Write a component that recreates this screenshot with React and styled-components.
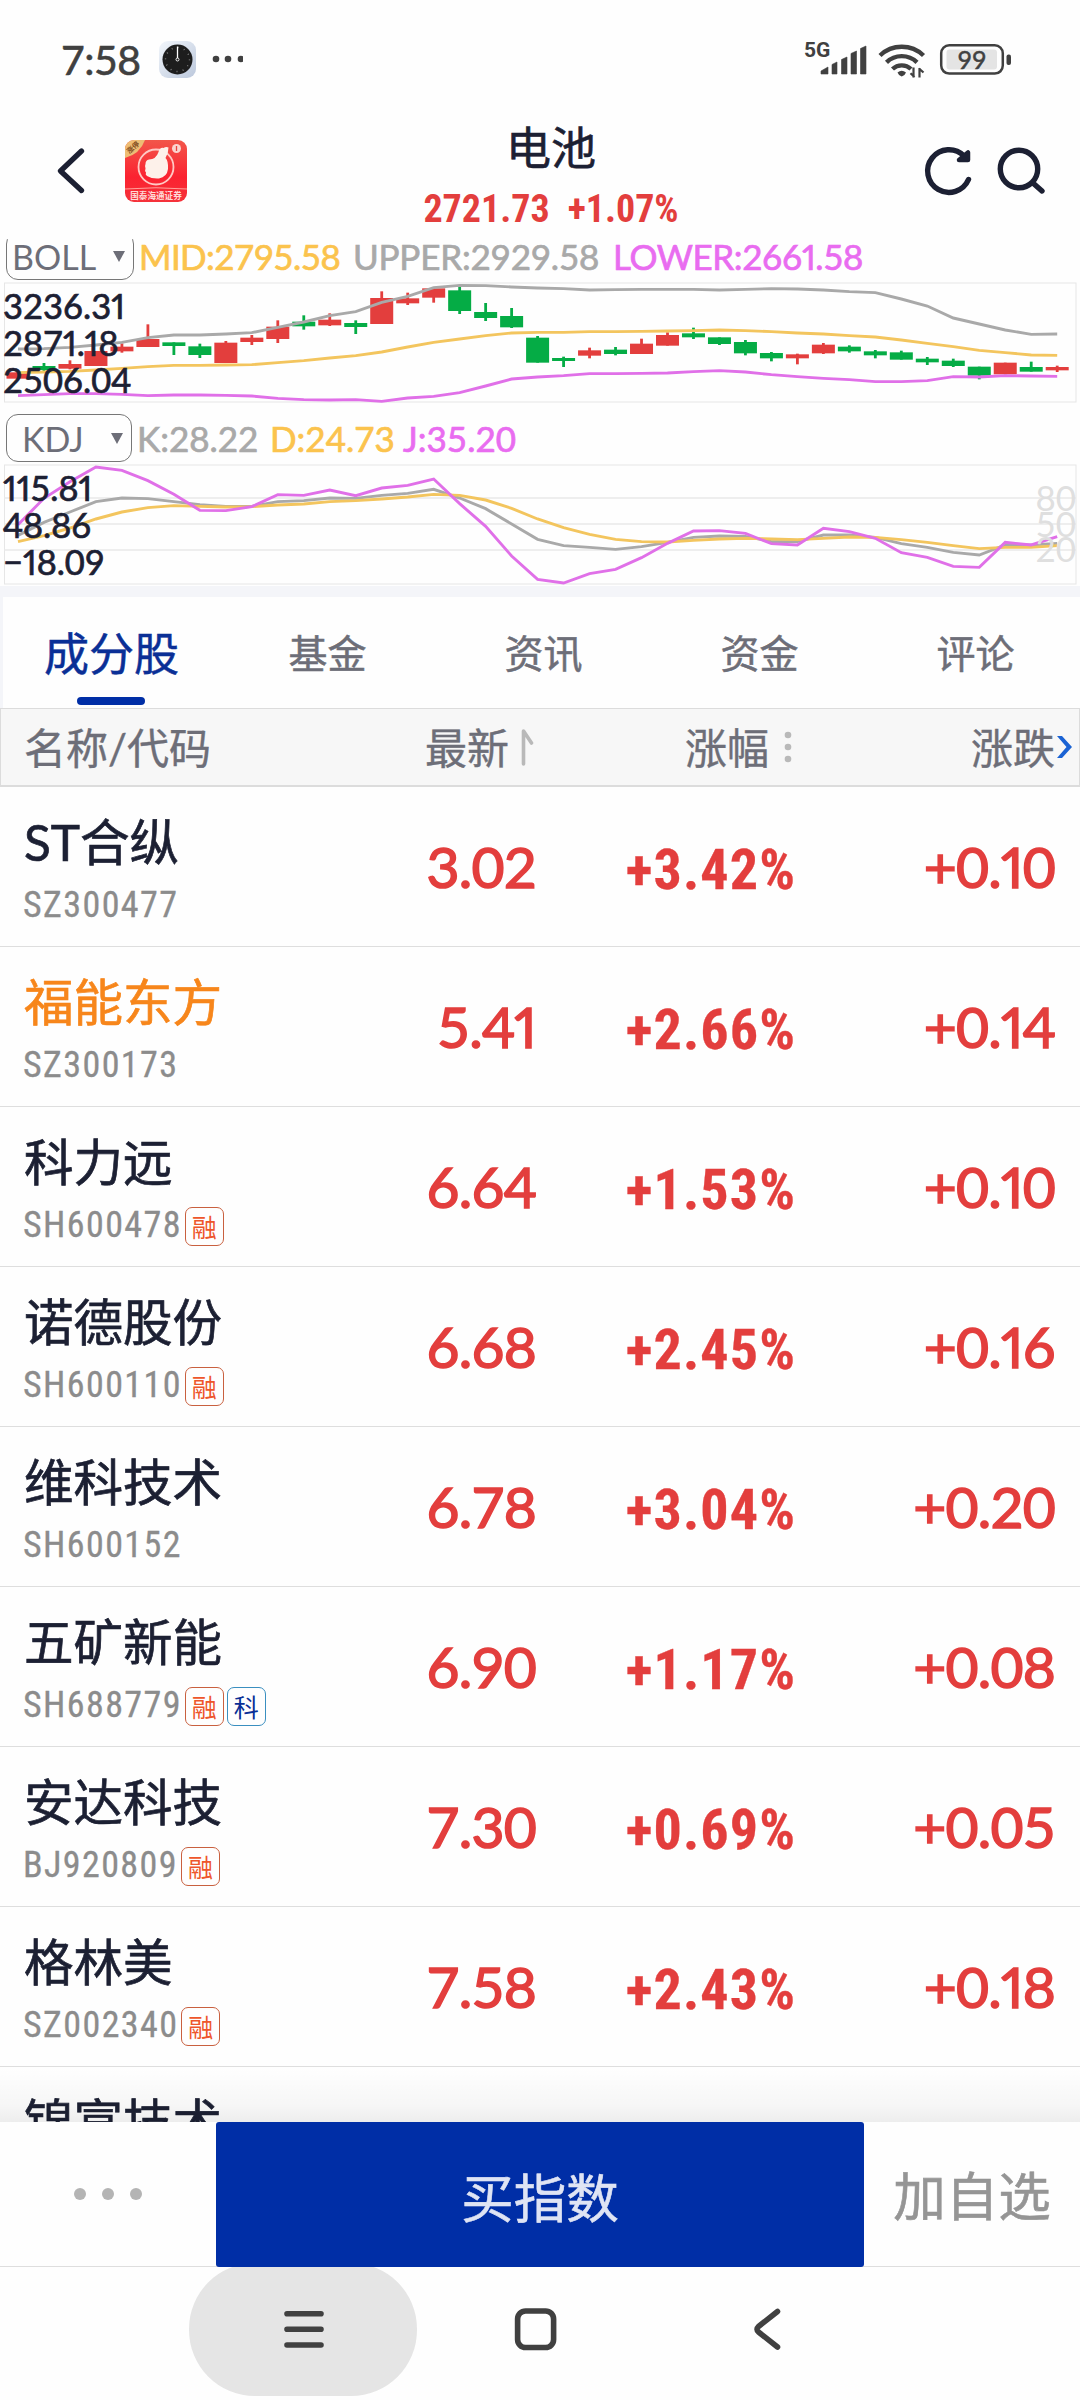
import React from 'react';
import styled, { createGlobalStyle } from 'styled-components';

const ink = '#1c2033';
const red = '#e33e3d';
const green = '#05ac45';
const blue = '#002ea6';
const muted = '#6d6e78';
const grey = '#a9a9a9';
const yellow = '#fbc34d';
const pink = '#e96cf0';

const GlobalStyle = createGlobalStyle`
  * {
    box-sizing: border-box;
  }

  body {
    margin: 0;
    background: #fefefe;
    font-family: Lato, 'Noto Sans CJK SC', sans-serif;
    color: ${ink};
  }
`;

const Screen = styled.div`
  width: 1080px;
  height: 2400px;
  display: flex;
  flex-direction: column;
  overflow: hidden;
  background: #fefefe;
`;

const StatusBar = styled.div`
  height: 100px;
  padding: 20px 66px 0 61px;
  display: flex;
  align-items: center;
  color: #404040;
`;

const Time = styled.span`
  width: 98px;
  font-size: 41px;
  line-height: 40px;
  letter-spacing: -0.5px;
  -webkit-text-stroke: 0.6px;
`;

const StatusIcons = styled.svg`
  margin-left: auto;
`;

const Header = styled.header`
  height: 139px;
  padding: 0 34px 0 56px;
  display: flex;
  align-items: flex-start;
`;

const HeaderLeft = styled.div`
  width: 300px;
  display: flex;
  gap: 39px;
  padding-top: 40px;
`;

const HeaderTitle = styled.div`
  width: 390px;
  text-align: center;
  padding-top: 19px;
`;

const Title = styled.h1`
  margin: 0;
  font-size: 45px;
  line-height: 58px;
  font-weight: 400;
  -webkit-text-stroke: 0.6px;
`;

const Quote = styled.div`
  font-family: Roboto, sans-serif;
  font-stretch: 87%;
  font-size: 38px;
  line-height: 44px;
  font-weight: 700;
  color: ${red};
  display: flex;
  justify-content: center;
  gap: 18px;
  margin-top: 10px;
`;

const HeaderRight = styled.div`
  margin-left: auto;
  padding-top: 40px;
`;

const Charts = styled.section`
  height: 347px;
  overflow: hidden;
  display: flex;
  flex-direction: column;
  flex-shrink: 0;
`;

const IndicatorRow = styled.div`
  height: 48px;
  margin-top: ${(p) => p.$top}px;
  padding-left: 6px;
  display: flex;
  align-items: center;
  flex-shrink: 0;
`;

const Select = styled.div`
  width: ${(p) => p.$width}px;
  height: 48px;
  border: 1.5px solid #777;
  border-radius: 12px;
  display: flex;
  align-items: center;
  justify-content: space-between;
  padding: 0 8px 0 ${(p) => p.$indent}px;
  font-size: 34px;
  color: ${muted};
`;

const Triangle = styled.i`
  border: 6px solid transparent;
  border-top: 11px solid ${muted};
  border-bottom: 0;
`;

const Value = styled.span`
  margin-left: ${(p) => p.$gap}px;
  width: ${(p) => p.$width}px;
  font-size: 35px;
  letter-spacing: ${(p) => p.$spacing || 0}px;
  -webkit-text-stroke: 0.7px;
  white-space: nowrap;
  color: ${(p) => p.$color};
`;

const ChartBox = styled.div`
  position: relative;
  height: 121px;
  margin-top: ${(p) => p.$top}px;
  flex-shrink: 0;

  svg {
    display: block;
  }
`;

const Axis = styled.div`
  position: absolute;
  left: 3px;
  top: ${(p) => p.$top}px;
  display: flex;
  flex-direction: column;
  font-size: 34.5px;
  line-height: 37px;
  -webkit-text-stroke: 0.7px;
`;

const Levels = styled.div`
  position: absolute;
  right: 4px;
  top: 21px;
  display: flex;
  flex-direction: column;
  font-size: 35px;
  line-height: 25.7px;
  color: #dfdfdf;
`;

const Tabs = styled.nav`
  height: 122px;
  border-top: 11px solid #f4f5f9;
  border-left: 3px solid #f4f5f9;
  display: flex;
  overflow: hidden;
  flex-shrink: 0;
`;

const Tab = styled.div`
  flex: 0 0 216px;
  display: flex;
  flex-direction: column;
  align-items: center;
  justify-content: space-between;
  padding-bottom: 3px;
  font-size: ${(p) => (p.$active ? 45 : 39)}px;
  line-height: ${(p) => (p.$active ? 114 : 113)}px;
  color: ${(p) => (p.$active ? '#0a2f96' : muted)};
  -webkit-text-stroke: 0.5px;
  height: 111px;

  span {
    height: 90px;
    padding-left: 1px;
  }

  &::after {
    content: '';
    width: 68px;
    height: 8px;
    border-radius: 4px;
    background: ${(p) => (p.$active ? blue : 'transparent')};
  }
`;

const columns = `
  display: grid;
  grid-template-columns: 384px 152px 260px 259px;
`;

const TableHead = styled.div`
  ${columns}
  height: 79px;
  flex-shrink: 0;
  align-items: center;
  background: #f7f7f7;
  border: 1px solid #dcdcdc;
  border-bottom-width: 2px;
  padding-top: 2px;
  font-size: 42px;
  line-height: 60px;
  color: ${muted};
  white-space: nowrap;
  -webkit-text-stroke: 0.4px;
`;

const HeadCell = styled.div`
  display: flex;
  align-items: center;
  justify-content: ${(p) => (p.$first ? 'flex-start' : 'flex-end')};
  padding-left: ${(p) => (p.$first ? 23 : 0)}px;
  margin-right: ${(p) => p.$shift || 0}px;

  svg {
    margin-left: ${(p) => p.$gap || 0}px;
    margin-top: -2px;
  }
`;

const List = styled.main`
  height: 1335px;
  overflow: hidden;
  flex-shrink: 0;
  position: relative;

  &::after {
    content: '';
    position: absolute;
    left: 0;
    right: 0;
    bottom: 0;
    height: 54px;
    background: linear-gradient(rgba(0, 0, 0, 0), rgba(0, 0, 0, 0.03) 70%, rgba(0, 0, 0, 0.065));
  }
`;

const Row = styled.div`
  ${columns}
  height: 160px;
  border-bottom: 1px solid #dedede;
`;

const Stock = styled.div`
  padding: 23px 0 0 24px;
  white-space: nowrap;
`;

const Name = styled.div`
  font-size: 49.5px;
  line-height: 64px;
  -webkit-text-stroke: 0.7px;
  color: ${(p) => (p.$hot ? '#f7861b' : ink)};
`;

const Code = styled.div`
  display: flex;
  align-items: center;
  gap: 3px;
  height: 39px;
  margin-top: 13px;
  margin-left: -1px;
  font-family: Roboto, sans-serif;
  font-stretch: 87%;
  font-size: 36px;
  color: #8c8c8c;

  > span:first-child {
    letter-spacing: 1.4px;
    margin-top: -3px;
    -webkit-text-stroke: 0.3px;
  }
`;

const Tag = styled.span`
  width: 39px;
  height: 39px;
  border: 1.5px solid ${(p) => (p.$blue ? '#3a8fc0' : '#c9603f')};
  border-radius: 7px;
  font-family: 'Noto Sans CJK SC', sans-serif;
  font-size: 25px;
  line-height: 37px;
  text-align: center;
  color: ${(p) => (p.$blue ? '#0a2f96' : '#ee562b')};
`;

const Num = styled.div`
  text-align: right;
  font-size: 57px;
  line-height: 70px;
  padding-top: 44px;
  letter-spacing: -0.8px;
  -webkit-text-stroke: 1.5px;
  color: ${red};
`;

const Percent = styled(Num)`
  font-family: Roboto, sans-serif;
  font-stretch: 87%;
  font-size: 56px;
  font-weight: 700;
  letter-spacing: 1.1px;
  -webkit-text-stroke: 0.3px;
  padding-top: 48px;
`;

const One = styled.span`
  font-variant-numeric: proportional-nums;
`;

const BottomBar = styled.div`
  height: 145px;
  flex-shrink: 0;
  display: flex;
  border-bottom: 1px solid #dedede;
`;

const More = styled.div`
  width: 216px;
  display: flex;
  align-items: center;
  justify-content: center;
  gap: 16px;

  i {
    width: 12px;
    height: 12px;
    border-radius: 50%;
    background: #b4b4b4;
  }
`;

const Buy = styled.button`
  width: 648px;
  height: 145px;
  border: 0;
  border-radius: 3px;
  background: ${blue};
  color: #dfe4f4;
  font: inherit;
  font-size: 52.5px;
  -webkit-text-stroke: 0.6px;
`;

const AddFavorite = styled.div`
  flex: 1;
  text-align: center;
  font-size: 52.5px;
  line-height: 148px;
  -webkit-text-stroke: 0.6px;
  color: #959595;
`;

const NavBar = styled.div`
  height: 133px;
  flex-shrink: 0;
`;

const x = (i) => 18 + i * 25.98;

// [high, low, body top, body bottom, rising]
const candles = [
  [427, 446, 427, 446, 1], [399, 428, 408, 420, 0], [391, 418, 402, 416, 1], [363, 408, 363, 408, 1],
  [340, 368, 350, 364, 1], [283, 351, 327, 351, 1], [337, 375, 337, 348, 0], [341, 384, 349, 375, 0],
  [333, 399, 338, 399, 1], [315, 345, 323, 336, 1], [271, 339, 290, 327, 1], [256, 299, 275, 289, 0],
  [250, 288, 269, 286, 1], [271, 312, 279, 291, 0], [184, 282, 204, 282, 1], [188, 225, 205, 220, 1],
  [175, 218, 175, 203, 1], [170, 252, 181, 243, 0], [219, 273, 246, 264, 0], [234, 294, 258, 292, 0],
  [318, 398, 323, 398, 0], [380, 411, 384, 393, 0], [353, 385, 361, 377, 1], [351, 376, 359, 372, 0],
  [326, 372, 341, 372, 1], [307, 347, 315, 347, 1], [293, 327, 310, 322, 0], [322, 345, 322, 342, 0],
  [330, 376, 336, 370, 0], [366, 394, 369, 385, 0], [371, 403, 373, 385, 1], [339, 372, 344, 370, 1],
  [346, 368, 350, 364, 0], [360, 385, 364, 376, 0], [362, 389, 367, 389, 0], [381, 405, 386, 397, 0],
  [386, 411, 392, 408, 0], [410, 448, 410, 437, 0], [398, 433, 398, 433, 1], [395, 425, 411, 425, 0],
  [407, 426, 411, 421, 1],
];

const boll = {
  upper: [357, 356, 352, 345, 337, 323, 315, 315, 312, 308, 292, 276, 257, 245, 217, 199, 173, 166, 167, 171, 174, 176, 180, 179, 178, 178, 178, 180, 178, 176, 177, 180, 185, 188, 207, 228, 264, 282, 300, 313, 312],
  mid: [428, 426, 424, 420, 415, 410, 406, 406, 405, 404, 398, 392, 384, 377, 366, 351, 337, 327, 317, 309, 307, 307, 305, 305, 304, 303, 302, 300, 302, 305, 309, 312, 317, 321, 330, 340, 350, 361, 368, 375, 376],
  lower: [497, 494, 491, 491, 493, 497, 495, 495, 496, 498, 505, 509, 510, 509, 514, 504, 499, 488, 468, 447, 441, 437, 431, 431, 430, 429, 425, 422, 426, 434, 440, 445, 449, 455, 455, 452, 440, 441, 437, 438, 439],
};

const kdj = {
  k: [916, 877, 846, 815, 804, 806, 815, 824, 829, 829, 815, 812, 804, 805, 796, 790, 778, 804, 836, 882, 928, 947, 952, 958, 950, 937, 922, 918, 919, 935, 935, 915, 915, 922, 941, 952, 967, 975, 945, 945, 940],
  d: [935, 917, 894, 867, 846, 833, 827, 829, 831, 830, 825, 822, 815, 812, 807, 801, 793, 796, 810, 835, 867, 893, 913, 928, 935, 936, 931, 927, 925, 927, 929, 925, 921, 922, 929, 937, 947, 956, 952, 952, 947],
  j: [884, 805, 755, 711, 721, 752, 793, 841, 842, 830, 794, 796, 780, 797, 774, 766, 747, 821, 889, 978, 1048, 1059, 1031, 1018, 983, 940, 903, 902, 910, 941, 945, 895, 905, 925, 968, 982, 1009, 1012, 937, 945, 920],
};

const Line = ({ data, base, color }) => (
  <polyline
    points={data.map((v, i) => `${x(i)},${(v - base) / 3}`).join(' ')}
    fill="none"
    stroke={color}
    strokeWidth="2.9"
  />
);

// tabular digits everywhere, except for a narrow 1
const Digits = ({ children }) =>
  children.split(/(1)/).filter(Boolean).map((part, i) => (part === '1' ? <One key={i}>1</One> : part));

const stocks = [
  { name: 'ST合纵', code: 'SZ300477', price: '3.02', pct: '+3.42%', diff: '+0.10' },
  { name: '福能东方', code: 'SZ300173', price: '5.41', pct: '+2.66%', diff: '+0.14', hot: true },
  { name: '科力远', code: 'SH600478', price: '6.64', pct: '+1.53%', diff: '+0.10', tags: ['融'] },
  { name: '诺德股份', code: 'SH600110', price: '6.68', pct: '+2.45%', diff: '+0.16', tags: ['融'] },
  { name: '维科技术', code: 'SH600152', price: '6.78', pct: '+3.04%', diff: '+0.20' },
  { name: '五矿新能', code: 'SH688779', price: '6.90', pct: '+1.17%', diff: '+0.08', tags: ['融', '科'] },
  { name: '安达科技', code: 'BJ920809', price: '7.30', pct: '+0.69%', diff: '+0.05', tags: ['融'] },
  { name: '格林美', code: 'SZ002340', price: '7.58', pct: '+2.43%', diff: '+0.18', tags: ['融'] },
  { name: '锦富技术', price: '', diff: '' },
];

const ClockIcon = () => (
  <svg width="84" height="38" viewBox="159 42 84 38">
    <defs>
      <linearGradient id="clockBg" x1="0" y1="0" x2="1" y2="1">
        <stop offset="0" stopColor="#f2f6fb" />
        <stop offset="1" stopColor="#bcc8dc" />
      </linearGradient>
    </defs>
    <rect x="159" y="42" width="37" height="37" rx="9" fill="url(#clockBg)" />
    <circle cx="177.5" cy="60.5" r="15" fill="#1d1d1d" />
    <circle cx="177.5" cy="60.5" r="12" fill="none" stroke="#999" strokeWidth="1.4" strokeDasharray="0.8 5.48" />
    <path d="M177.5 47.5V60" stroke="#fff" strokeWidth="1.3" />
    <circle cx="177.5" cy="60.5" r="1.5" fill="#1d1d1d" stroke="#fff" strokeWidth="0.9" />
    <g fill="#404040">
      <circle cx="216" cy="60" r="3.3" />
      <circle cx="228" cy="60" r="3.3" />
      <circle cx="241" cy="60" r="3.3" />
    </g>
  </svg>
);

const SystemIcons = () => (
  <StatusIcons width="212" height="50" viewBox="802 35 212 50" fill="#404040">
    <text x="804" y="57" fontFamily="Roboto, sans-serif" fontSize="21" fontWeight="700">5G</text>
    <path d="M821 74V71L828 67V74ZM832 74V64.5L837 62V74ZM841.5 74V59.5L847 57V74ZM851 74V53.5L856.5 51V74ZM860.5 74V48.5L866 46V74Z" stroke="#404040" strokeWidth="0.6" strokeLinejoin="round" />
    <g fill="none" stroke="#404040" strokeWidth="4.4">
      <path d="M880 55.5A31.5 31.5 0 0 1 923.5 55.5" />
      <path d="M886.5 62.3A22 22 0 0 1 917 62.3" />
      <path d="M892.5 69A13.5 13.5 0 0 1 911 69" />
    </g>
    <path d="M897.5 72.5Q901.7 69 906 72.5Q905 75.5 901.7 76.5Q898.5 75.5 897.5 72.5Z" />
    <path d="M913.5 67.5V77.5M914.5 77L910.5 73.3M919.5 77.5V68M919 68.5L923.5 72.5" stroke="#404040" strokeWidth="2.2" fill="none" />
    <rect x="941.2" y="45.3" width="61.6" height="28.3" rx="8" fill="none" stroke="#404040" strokeWidth="2.5" />
    <rect x="946.5" y="49.5" width="50.5" height="20" rx="3" fill="#e4e4e4" />
    <rect x="1006.5" y="54.5" width="4.5" height="10.5" rx="2" />
    <text x="972" y="68.5" fontFamily="Lato, sans-serif" fontSize="25" stroke="#404040" strokeWidth="0.5" textAnchor="middle">99</text>
  </StatusIcons>
);

const BackIcon = () => (
  <svg width="30" height="62" viewBox="56 140 30 62">
    <path d="M81.5 151L60.5 171L81.5 190.5" fill="none" stroke={ink} strokeWidth="5.3" strokeLinecap="round" strokeLinejoin="round" />
  </svg>
);

const BrokerLogo = () => (
  <svg width="62" height="62" viewBox="0 0 62 62">
    <defs>
      <linearGradient id="logoBg" x1="0" y1="0" x2="0" y2="1">
        <stop offset="0" stopColor="#f2564a" />
        <stop offset="0.6" stopColor="#fb2230" />
        <stop offset="1" stopColor="#f5323a" />
      </linearGradient>
      <clipPath id="logoClip">
        <rect width="62" height="62" rx="9" />
      </clipPath>
    </defs>
    <g clipPath="url(#logoClip)">
      <rect width="62" height="62" fill="url(#logoBg)" />
      <path d="M0 0H20Q15 14 0 18Z" fill="#eebd74" />
      <text x="0" y="0" fontSize="7" fontWeight="700" fill="#7d4a1c" transform="translate(4.5 14) rotate(-42)">涨停</text>
      <circle cx="31" cy="27" r="17.5" fill="none" stroke="#ffc9c4" strokeWidth="1.8" />
      <path d="M20.5 24Q20.5 20 24 19.500Q31 19.500 33.500 12Q35 7 38.500 8Q41 6.500 43.500 7.500Q43.500 13 40.500 18Q43.500 21 43 29Q42 37 34 38.500Q27 39 22 36Q20 34.500 21 32.500Q19.500 30.500 20.500 28.500Q19.500 26 20.500 24Z" fill="#fdf1ea" />
      <circle cx="51.5" cy="8.5" r="4.5" fill="#fbd5cf" />
      <path d="M51.5 6V11" stroke="#e8443e" strokeWidth="1.3" />
      <path d="M0 49Q31 46.5 62 49" fill="none" stroke="#ffa09a" strokeWidth="1" />
      <text x="31" y="58.5" fontSize="8.6" fontWeight="700" fill="#ffd9d6" textAnchor="middle">国泰海通证券</text>
    </g>
  </svg>
);

const HeaderActions = () => (
  <svg width="124" height="62" viewBox="922 140 124 62" fill="none" stroke={ink} strokeWidth="5.4" strokeLinecap="round" strokeLinejoin="round">
    <path d="M968.5 179.5A21.3 21.3 0 1 1 964 156" />
    <path d="M968 152.5V160H959Z" fill={ink} strokeWidth="4.5" />
    <circle cx="1019" cy="169" r="18.7" />
    <path d="M1033.5 183.5L1042 191" />
  </svg>
);

const SortIcon = () => (
  <svg width="13" height="38" viewBox="0 0 13 38">
    <path d="M2.5 36V3L10.5 15" fill="none" stroke="#b9b9b9" strokeWidth="3.6" strokeLinecap="round" strokeLinejoin="round" />
  </svg>
);

const DotsIcon = () => (
  <svg width="8" height="38" viewBox="0 0 8 38" fill="#b9b9b9">
    <circle cx="4" cy="7" r="3.3" />
    <circle cx="4" cy="19" r="3.3" />
    <circle cx="4" cy="31" r="3.3" />
  </svg>
);

const ChevronIcon = () => (
  <svg width="15" height="24" viewBox="0 0 15 24">
    <path d="M0 1H5L15 12L5 23H0L9.5 12Z" fill="#1b63d4" />
  </svg>
);

const NavIcons = () => (
  <svg width="1080" height="133" viewBox="0 2267 1080 133" fill="none" stroke="#404040" strokeWidth="5.6" strokeLinecap="round" strokeLinejoin="round">
    <rect x="189" y="2263" width="228" height="133" rx="66" fill="#e5e5e5" stroke="none" />
    <path d="M287 2313.7H321M287 2329.3H321M287 2345H321" />
    <rect x="517.6" y="2311" width="36" height="36.5" rx="8" />
    <path d="M777.5 2311.5L758.5 2326.5Q755.5 2329.3 758.5 2332L777.5 2347" />
  </svg>
);

const App = () => {
  return (
    <Screen>
      <GlobalStyle />
      <StatusBar>
        <Time>7:58</Time>
        <ClockIcon />
        <SystemIcons />
      </StatusBar>

      <Header>
        <HeaderLeft>
          <BackIcon />
          <BrokerLogo />
        </HeaderLeft>
        <HeaderTitle>
          <Title>电池</Title>
          <Quote>
            <span>2721.73</span>
            <span>+1.07%</span>
          </Quote>
        </HeaderTitle>
        <HeaderRight>
          <HeaderActions />
        </HeaderRight>
      </Header>

      <Charts>
        <IndicatorRow $top={-7}>
          <Select $width={128} $indent={5}>BOLL<Triangle /></Select>
          <Value $gap={5} $width={214} $spacing={-0.6} $color={yellow}>MID:2795.58</Value>
          <Value $gap={0} $width={260} $spacing={-0.2} $color={grey}>UPPER:2929.58</Value>
          <Value $gap={0} $width={260} $spacing={-0.4} $color={pink}><Digits>LOWER:2661.58</Digits></Value>
        </IndicatorRow>
        <ChartBox $top={2}>
          <svg width="1080" height="121">
            <rect x="4.5" y="1" width="1071.5" height="119" fill="none" stroke="#e6e6e6" />
            {candles.map(([hi, lo, top, bottom, up], i) => (
              <g key={i} fill={up ? red : green}>
                <rect x={x(i) - 1.4} y={(hi - 156) / 3} width="2.8" height={(lo - hi) / 3} />
                <rect x={x(i) - 11.5} y={(top - 156) / 3} width="23" height={(bottom - top) / 3} />
              </g>
            ))}
            <Line data={boll.upper} base={156} color={grey} />
            <Line data={boll.mid} base={156} color="#f3c55e" />
            <Line data={boll.lower} base={156} color="#e070e8" />
          </svg>
          <Axis $top={5}>
            <span><Digits>3236.31</Digits></span>
            <span><Digits>2871.18</Digits></span>
            <span>2506.04</span>
          </Axis>
        </ChartBox>

        <IndicatorRow $top={11}>
          <Select $width={126} $indent={15}>KDJ<Triangle /></Select>
          <Value $gap={5} $width={133} $color={grey}>K:28.22</Value>
          <Value $gap={0} $width={133} $color={yellow}>D:24.73</Value>
          <Value $gap={0} $width={130} $color={pink}>J:35.20</Value>
        </IndicatorRow>
        <ChartBox $top={2}>
          <svg width="1080" height="121">
            <rect x="4.5" y="1" width="1071.5" height="119" fill="none" stroke="#e6e6e6" />
            <path d="M4 34H1076M4 60H1076M4 86H1076" stroke="#e9e9e9" strokeWidth="1.4" />
            <Line data={kdj.k} base={702} color={grey} />
            <Line data={kdj.d} base={702} color="#f3c55e" />
            <Line data={kdj.j} base={702} color="#e070e8" />
          </svg>
          <Levels>
            <span>80</span>
            <span>50</span>
            <span>20</span>
          </Levels>
          <Axis $top={5}>
            <span><Digits>115.81</Digits></span>
            <span>48.86</span>
            <span><Digits>−18.09</Digits></span>
          </Axis>
        </ChartBox>
      </Charts>

      <Tabs>
        {['成分股', '基金', '资讯', '资金', '评论'].map((label, i) => (
          <Tab key={label} $active={i === 0}>
            <span>{label}</span>
          </Tab>
        ))}
      </Tabs>

      <TableHead>
        <HeadCell $first>名称/代码</HeadCell>
        <HeadCell $gap={12} $shift={3}>最新<SortIcon /></HeadCell>
        <HeadCell $gap={15} $shift={5}>涨幅<DotsIcon /></HeadCell>
        <HeadCell $gap={2} $shift={-16}>涨跌<ChevronIcon /></HeadCell>
      </TableHead>

      <List>
        {stocks.map((s) => (
          <Row key={s.name}>
            <Stock>
              <Name $hot={s.hot}>{s.name}</Name>
              <Code>
                <span>{s.code}</span>
                {s.tags && s.tags.map((t) => <Tag key={t} $blue={t === '科'}>{t}</Tag>)}
              </Code>
            </Stock>
            <Num><Digits>{s.price}</Digits></Num>
            <Percent>{s.pct}</Percent>
            <Num><Digits>{s.diff}</Digits></Num>
          </Row>
        ))}
      </List>

      <BottomBar>
        <More>
          <i />
          <i />
          <i />
        </More>
        <Buy>买指数</Buy>
        <AddFavorite>加自选</AddFavorite>
      </BottomBar>

      <NavBar>
        <NavIcons />
      </NavBar>
    </Screen>
  );
};

export default App;
